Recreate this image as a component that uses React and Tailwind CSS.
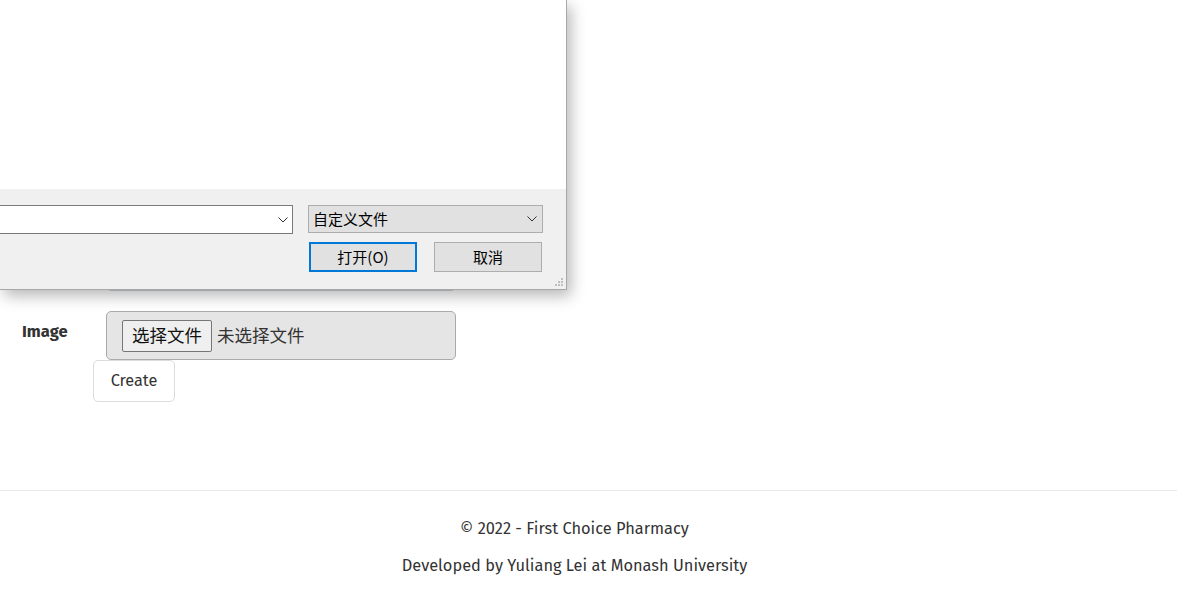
import React from "react";

const sans = { fontFamily: '"Fira Sans","Noto Sans","Open Sans",sans-serif' };
const cjk = { fontFamily: '"Microsoft YaHei","Noto Sans CJK SC",sans-serif' };

function Chevron() {
  return (
    <svg width="10" height="6" viewBox="0 0 10 6" className="text-[#333]">
      <path d="M0.5 0.5 L5 5 L9.5 0.5" fill="none" stroke="currentColor" strokeWidth="1" />
    </svg>
  );
}

function Grip() {
  const dots = [
    [6, 0],
    [3, 3],
    [6, 3],
    [0, 6],
    [3, 6],
    [6, 6],
  ];
  return (
    <svg width="9" height="9" viewBox="0 0 9 9">
      {dots.map(([x, y], i) => (
        <rect key={i} x={x} y={y} width="2" height="2" fill="#bfbfbf" />
      ))}
    </svg>
  );
}

export default function App() {
  return (
    <div className="relative min-h-[595px] w-[1177px] bg-white text-[#212529]" style={sans}>
      {/* form area */}
      <div className="flex flex-col pt-[243px]">
        <div className="ml-[106px] h-[48px] w-[350px] rounded-[5px] border border-[#ced4da] bg-white" />
        <div className="mt-[20px] flex items-start">
          <div className="w-[106px] pl-[22px] pt-[9px] text-[16.5px] font-bold text-[#333]">Image</div>
          <div className="flex h-[49px] w-[350px] items-center rounded-[5px] border border-[#aaa] bg-[#e5e5e5] pl-[15px]" style={cjk}>
            <span className="flex h-[32px] items-center rounded-[2px] border border-[#767676] bg-[#efefef] px-[9px] text-[17.5px] text-[#111]">
              选择文件
            </span>
            <span className="ml-[5px] text-[17.5px] text-[#333]">未选择文件</span>
          </div>
        </div>
        <div className="ml-[93px] flex h-[42px] w-[82px] items-center justify-center rounded-[5px] border border-[#dcdcdc] bg-white text-[16.3px] text-[#333]">
          Create
        </div>
      </div>

      {/* footer */}
      <div className="mt-[88px] border-t border-[#e9e9e9] pr-[28px] pt-[26px] text-center text-[16.4px] text-[#333]">
        <div className="leading-[24px]">© 2022 - First Choice Pharmacy</div>
        <div className="mt-[13px] leading-[24px]">Developed by Yuliang Lei at Monash University</div>
      </div>

      {/* file dialog overlay */}
      <div
        className="absolute left-0 top-0 flex h-[290px] w-[567px] flex-col border-r border-b border-[#a8a8a8] bg-white shadow-[4px_6px_14px_rgba(0,0,0,0.28)]"
        style={cjk}
      >
        <div className="h-[189px] bg-white" />
        <div className="relative flex flex-1 flex-col bg-[#f0f0f0] pt-[16px]">
          <div className="flex items-start">
            <div className="flex h-[29px] w-[293px] items-center justify-end border border-[#7a7a7a] border-l-0 bg-white pr-[4px]">
              <Chevron />
            </div>
            <div className="ml-[15px] flex h-[28px] w-[235px] items-center justify-between border border-[#adadad] bg-[#e1e1e1] pl-[4px] pr-[5px] text-[15px] text-black">
              <span>自定义文件</span>
              <Chevron />
            </div>
          </div>
          <div className="mt-[8px] flex">
            <div className="ml-[309px] flex h-[30px] w-[108px] items-center justify-center border-2 border-[#0078d7] bg-[#e1e1e1] text-[15px] text-black">
              打开(O)
            </div>
            <div className="ml-[17px] flex h-[30px] w-[108px] items-center justify-center border border-[#adadad] bg-[#e1e1e1] text-[15px] text-black">
              取消
            </div>
          </div>
          <div className="absolute bottom-[2px] right-[2px]">
            <Grip />
          </div>
        </div>
      </div>
    </div>
  );
}
